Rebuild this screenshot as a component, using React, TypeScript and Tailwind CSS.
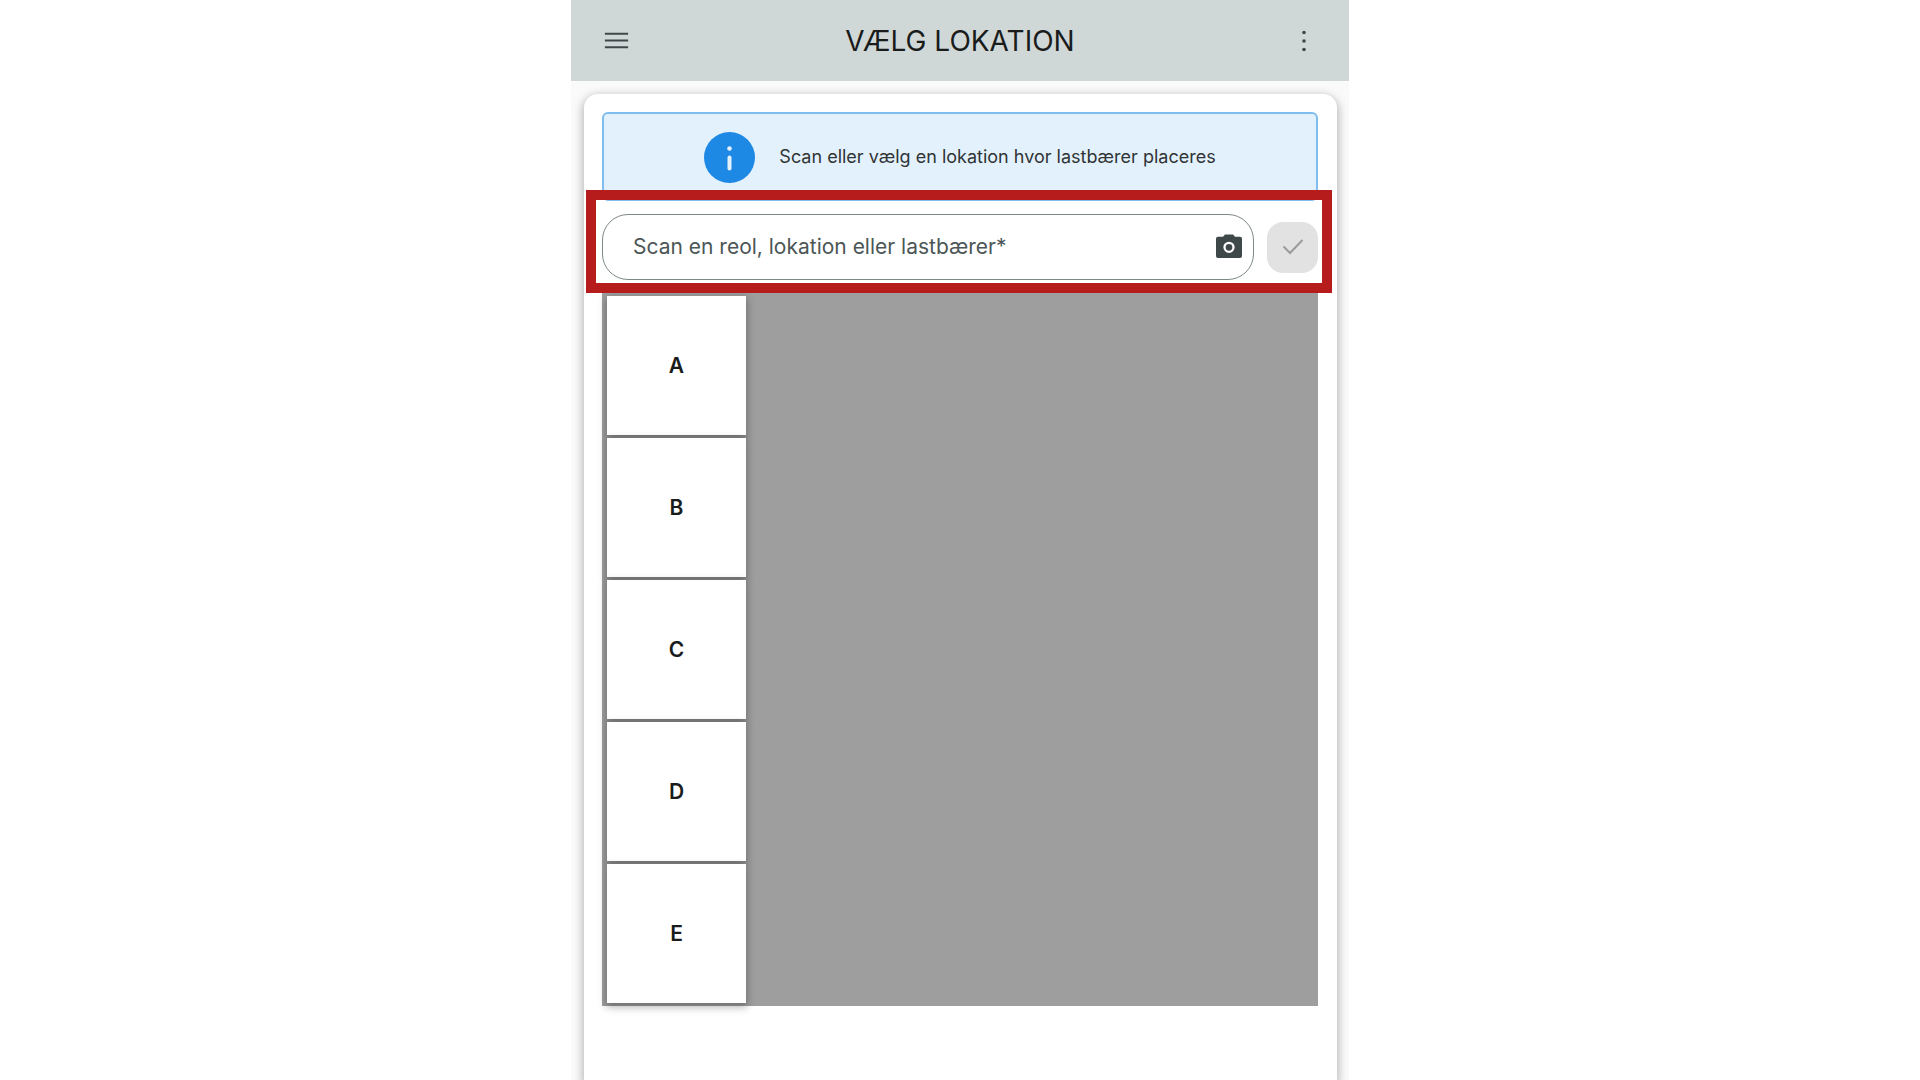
const shelves = ["A", "B", "C", "D", "E"];

function Header() {
  return (
    <header className="flex h-[81px] items-center justify-between bg-[#d0d8d7] px-5 text-[#1a1c1c]">
      <button type="button" aria-label="Menu" className="flex size-[51px] items-center justify-center">
        <svg width="31" height="31" viewBox="0 0 24 24" fill="#3f4849" aria-hidden="true">
          <path d="M3 18h18v-1.5H3V18zm0-5.2h18v-1.5H3v1.5zM3 6v1.5h18V6H3z" />
        </svg>
      </button>
      <h1 className="text-[28px] leading-9">VÆLG LOKATION</h1>
      <button type="button" aria-label="Flere valg" className="flex size-[51px] items-center justify-center">
        <svg width="30" height="30" viewBox="0 0 30 30" fill="#3f4849" aria-hidden="true">
          <circle cx="15" cy="6.5" r="1.8" />
          <circle cx="15" cy="15" r="1.8" />
          <circle cx="15" cy="23.5" r="1.8" />
        </svg>
      </button>
    </header>
  );
}

function InfoBanner() {
  return (
    <div role="status" className="flex h-[89px] items-center justify-center gap-6 rounded-md border-2 border-[#7fbcf0] bg-[#e3f1fd] pt-px text-[#303435]">
      <svg width="51" height="51" viewBox="0 0 51 51" aria-hidden="true">
        <circle cx="25.500" cy="25.500" r="25.500" fill="#1e88e5" />
        <circle cx="25.500" cy="16.500" r="2.300" fill="#e3f1fd" />
        <path d="M25.500 25.500v11" stroke="#e3f1fd" strokeWidth="4" strokeLinecap="round" />
      </svg>
      <p className="text-[18px] leading-6">Scan eller vælg en lokation hvor lastbærer placeres</p>
    </div>
  );
}

function ScanForm() {
  return (
    <form className="relative mt-[13px] flex items-center gap-[13px]" onSubmit={(e) => e.preventDefault()}>
      <div className="flex h-[66px] min-w-0 flex-1 items-center rounded-[26px] border border-[#7d8886] pr-2 pl-[30px]">
        <input
          type="text"
          aria-label="Scan en reol, lokation eller lastbærer"
          placeholder="Scan en reol, lokation eller lastbærer*"
          className="min-w-0 flex-1 bg-transparent text-[21px] leading-7 text-[#3f4849] outline-none placeholder:text-[#4c5656]"
        />
        <button type="button" aria-label="Kamera" className="flex size-8 items-center justify-center">
          <svg width="32" height="32" viewBox="0 0 32 32" aria-hidden="true">
            <path d="M12 3.500h8l2 2.300h5a2 2 0 0 1 2 2V25a2 2 0 0 1-2 2H5a2 2 0 0 1-2-2V7.800a2 2 0 0 1 2-2h5z" fill="#3f4849" />
            <circle cx="16" cy="16.300" r="4.500" fill="none" stroke="#fff" strokeWidth="2.300" />
          </svg>
        </button>
      </div>
      <button type="submit" aria-label="Bekræft" disabled className="flex size-[51px] items-center justify-center rounded-2xl bg-[#e2e2e2]">
        <svg width="24" height="24" viewBox="0 0 24 24" fill="none" stroke="#9b9b9b" strokeWidth="2" aria-hidden="true">
          <path d="M2.500 11.500 9 18 21.500 5" />
        </svg>
      </button>
      <div className="pointer-events-none absolute -top-6 -right-[14px] -bottom-[13px] -left-4 border-[10px] border-[#b71c1c]" />
    </form>
  );
}

export default function App() {
  return (
    <div className="min-h-screen bg-white font-['Inter',sans-serif]">
      <div className="mx-auto flex min-h-screen max-w-[778px] flex-col overflow-hidden bg-[#fafafa]">
        <Header />
        <main className="mt-[13px] mr-3 ml-[13px] flex-1 rounded-t-[14px] bg-white pt-[18px] pr-[19px] pl-[18px] shadow-[0_3px_8px_2px_rgba(0,0,0,0.25)]">
          <InfoBanner />
          <ScanForm />
          <section aria-label="Reoler" className="mt-[11px] flex flex-col items-start gap-[3px] bg-[#9e9e9e] pt-[5px] pb-[3px] pl-[5px]">
            {shelves.map((shelf) => (
              <button
                key={shelf}
                type="button"
                className="size-[139px] bg-white text-[21px] leading-7 font-semibold text-[#1a1c1c] shadow-[0_3px_8px_1px_rgba(0,0,0,0.3)]"
              >
                {shelf}
              </button>
            ))}
          </section>
        </main>
      </div>
    </div>
  );
}
